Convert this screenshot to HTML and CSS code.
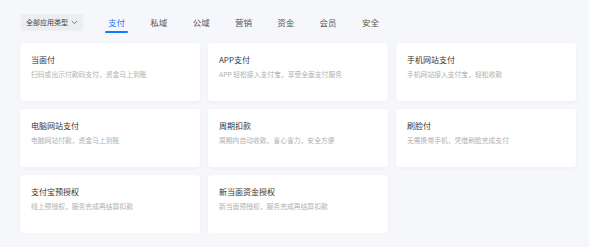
FILE: index.html
```html
<!DOCTYPE html>
<html lang="zh-CN">
<head>
    <meta charset="UTF-8">
    <meta name="viewport" content="width=device-width, initial-scale=1.0">
    <title>应用中心</title>
    <link rel="stylesheet" href="styles.css">
</head>
<body>
    <div class="toolbar">
        <div class="type-select">
            <span>全部应用类型</span>
            <svg class="chevron" width="7" height="5" viewBox="0 0 7 5">
                <path d="M0.8 1 L3.5 3.7 L6.2 1" fill="none" stroke="#666" stroke-width="0.9"/>
            </svg>
        </div>
        <nav class="tabs">
            <span class="tab active">支付</span>
            <span class="tab">私域</span>
            <span class="tab">公域</span>
            <span class="tab">营销</span>
            <span class="tab">资金</span>
            <span class="tab">会员</span>
            <span class="tab">安全</span>
        </nav>
    </div>

    <div class="cards">
        <div class="card">
            <div class="card-title">当面付</div>
            <div class="card-desc">扫码或出示付款码支付，资金马上到账</div>
        </div>
        <div class="card">
            <div class="card-title">APP支付</div>
            <div class="card-desc">APP 轻松接入支付宝，享受全面支付服务</div>
        </div>
        <div class="card">
            <div class="card-title">手机网站支付</div>
            <div class="card-desc">手机网站接入支付宝，轻松收款</div>
        </div>
        <div class="card">
            <div class="card-title">电脑网站支付</div>
            <div class="card-desc">电脑网站付款，资金马上到账</div>
        </div>
        <div class="card">
            <div class="card-title">周期扣款</div>
            <div class="card-desc">周期内自动收款，省心省力，安全方便</div>
        </div>
        <div class="card">
            <div class="card-title">刷脸付</div>
            <div class="card-desc">无需携带手机，凭借刷脸完成支付</div>
        </div>
        <div class="card">
            <div class="card-title">支付宝预授权</div>
            <div class="card-desc">线上预授权，服务完成再结算扣款</div>
        </div>
        <div class="card">
            <div class="card-title">新当面资金授权</div>
            <div class="card-desc">新当面预授权，服务完成再结算扣款</div>
        </div>
    </div>
</body>
</html>
```

FILE: styles.css
```css
body {
    margin: 0;
    padding: 13px 20px 0 21px;
    background-color: #f6f7fa;
    font-family: "Noto Sans CJK SC", "Noto Sans", sans-serif;
    color: #333;
}
.toolbar {
    display: flex;
    align-items: center;
    height: 18px;
}
.type-select {
    display: flex;
    align-items: center;
    justify-content: space-between;
    box-sizing: border-box;
    width: 62px;
    height: 17px;
    padding: 0 5px 0 5px;
    background-color: #eceef1;
    border-radius: 2px;
    font-size: 7px;
    color: #444;
}
.tabs {
    display: flex;
    gap: 19.3px;
    margin-left: 22px;
}
.tab {
    position: relative;
    padding: 0 3px;
    font-size: 8.5px;
    line-height: 18px;
    color: #555;
}
.tab.active {
    color: #1677ff;
}
.tab.active::after {
    content: "";
    position: absolute;
    left: 0;
    right: 0;
    bottom: -2px;
    height: 2px;
    border-radius: 1px;
    background-color: #1677ff;
}
.cards {
    display: grid;
    grid-template-columns: repeat(3, 180px);
    grid-auto-rows: 58px;
    column-gap: 8px;
    row-gap: 8px;
    margin-top: 12px;
    margin-left: -1px;
}
.card {
    box-sizing: border-box;
    padding: 11px 11px;
    background-color: #fff;
    border-radius: 4px;
    box-shadow: 0 1px 4px rgba(30, 40, 80, 0.04);
}
.card-title {
    font-size: 8px;
    line-height: 12px;
    color: #333;
}
.card-desc {
    margin-top: 3px;
    font-size: 6.8px;
    line-height: 10px;
    color: #b0b0b0;
    white-space: nowrap;
}
```
